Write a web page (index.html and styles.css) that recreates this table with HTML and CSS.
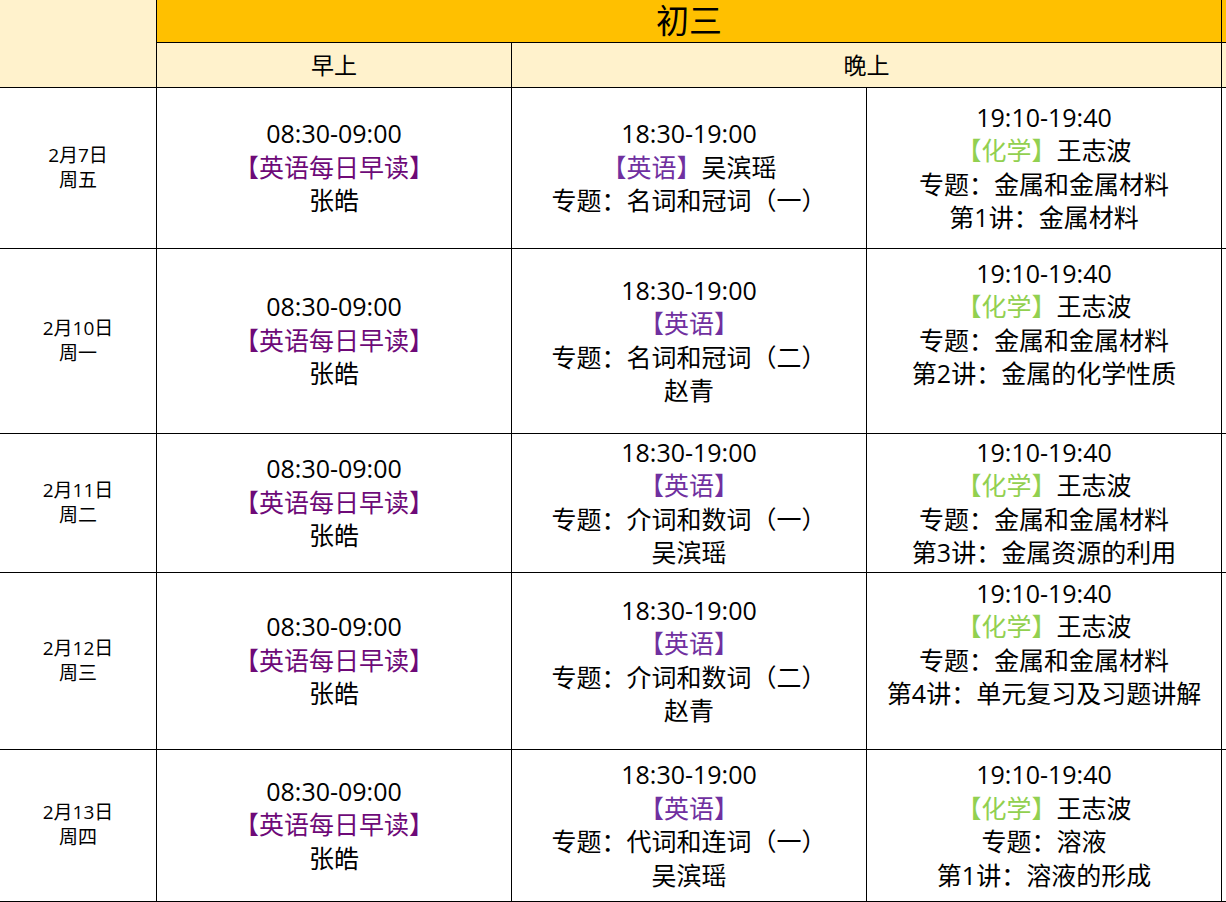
FILE: index.html
```html
<!DOCTYPE html>
<html lang="zh">
<head>
<meta charset="utf-8">
<link rel="stylesheet" href="styles.css">
</head>
<body>
<table class="sched">
  <colgroup>
    <col class="c-date"><col class="c-main"><col class="c-main"><col class="c-main"><col class="c-main">
  </colgroup>
  <tr class="r-title">
    <td class="corner" rowspan="2"></td>
    <td class="title" colspan="3">初三</td>
    <td class="title"></td>
  </tr>
  <tr class="r-sub">
    <td class="sub">早上</td>
    <td class="sub" colspan="2">晚上</td>
    <td class="sub"></td>
  </tr>
  <tr class="r1">
    <td class="date"><div>2月7日</div><div>周五</div></td>
    <td class="cell"><div>08:30-09:00</div><div class="morn">【英语每日早读】</div><div>张皓</div></td>
    <td class="cell"><div>18:30-19:00</div><div><span class="eng">【英语】</span>吴滨瑶</div><div>专题：名词和冠词（一）</div></td>
    <td class="cell"><div>19:10-19:40</div><div><span class="chem">【化学】</span>王志波</div><div>专题：金属和金属材料</div><div>第1讲：金属材料</div></td>
    <td class="cell"></td>
  </tr>
  <tr class="r2">
    <td class="date"><div>2月10日</div><div>周一</div></td>
    <td class="cell"><div>08:30-09:00</div><div class="morn">【英语每日早读】</div><div>张皓</div></td>
    <td class="cell"><div>18:30-19:00</div><div><span class="eng">【英语】</span></div><div>专题：名词和冠词（二）</div><div>赵青</div></td>
    <td class="cell"><div>19:10-19:40</div><div><span class="chem">【化学】</span>王志波</div><div>专题：金属和金属材料</div><div>第2讲：金属的化学性质</div><div>&nbsp;</div></td>
    <td class="cell"></td>
  </tr>
  <tr class="r3">
    <td class="date"><div>2月11日</div><div>周二</div></td>
    <td class="cell"><div>08:30-09:00</div><div class="morn">【英语每日早读】</div><div>张皓</div></td>
    <td class="cell"><div>18:30-19:00</div><div><span class="eng">【英语】</span></div><div>专题：介词和数词（一）</div><div>吴滨瑶</div></td>
    <td class="cell"><div>19:10-19:40</div><div><span class="chem">【化学】</span>王志波</div><div>专题：金属和金属材料</div><div>第3讲：金属资源的利用</div></td>
    <td class="cell"></td>
  </tr>
  <tr class="r4">
    <td class="date"><div>2月12日</div><div>周三</div></td>
    <td class="cell"><div>08:30-09:00</div><div class="morn">【英语每日早读】</div><div>张皓</div></td>
    <td class="cell"><div>18:30-19:00</div><div><span class="eng">【英语】</span></div><div>专题：介词和数词（二）</div><div>赵青</div></td>
    <td class="cell"><div>19:10-19:40</div><div><span class="chem">【化学】</span>王志波</div><div>专题：金属和金属材料</div><div>第4讲：单元复习及习题讲解</div><div>&nbsp;</div></td>
    <td class="cell"></td>
  </tr>
  <tr class="r5">
    <td class="date"><div>2月13日</div><div>周四</div></td>
    <td class="cell"><div>08:30-09:00</div><div class="morn">【英语每日早读】</div><div>张皓</div></td>
    <td class="cell"><div>18:30-19:00</div><div><span class="eng">【英语】</span></div><div>专题：代词和连词（一）</div><div>吴滨瑶</div></td>
    <td class="cell"><div>19:10-19:40</div><div><span class="chem">【化学】</span>王志波</div><div>专题：溶液</div><div>第1讲：溶液的形成</div></td>
    <td class="cell"></td>
  </tr>
</table>
</body>
</html>
```

FILE: styles.css
```css
html, body {
  margin: 0;
  padding: 0;
  background: #fff;
  overflow: hidden;
}
body {
  width: 1226px;
  height: 902px;
  font-family: "Open Sans", "Noto Sans CJK SC", sans-serif;
  color: #000;
}
.sched {
  border-collapse: collapse;
  table-layout: fixed;
  width: 1578px;
  margin: 0 0 0 -1px;
}
.c-date { width: 157px; }
.c-main { width: 355px; }
.sched td {
  border: 1px solid #000;
  padding: 0;
  text-align: center;
  vertical-align: middle;
}
.sched .r-title td { border-top: none; }
.r-title { height: 42px; }
.r-sub { height: 45px; }
.r1 { height: 161px; }
.r2 { height: 185px; }
.r3 { height: 139px; }
.r4 { height: 177px; }
.r5 { height: 152px; }
.corner { background: #fff2cc; }
.title {
  background: #ffc000;
  font-size: 33px;
  line-height: 38px;
}
.sub {
  background: #fff2cc;
  font-size: 23px;
  line-height: 30px;
}
.date {
  font-size: 19px;
  line-height: 25px;
}
.cell {
  font-size: 25px;
  line-height: 33.5px;
}
.morn { color: #6e0a78; }
.eng { color: #7030a0; }
.chem { color: #92d050; }
```
